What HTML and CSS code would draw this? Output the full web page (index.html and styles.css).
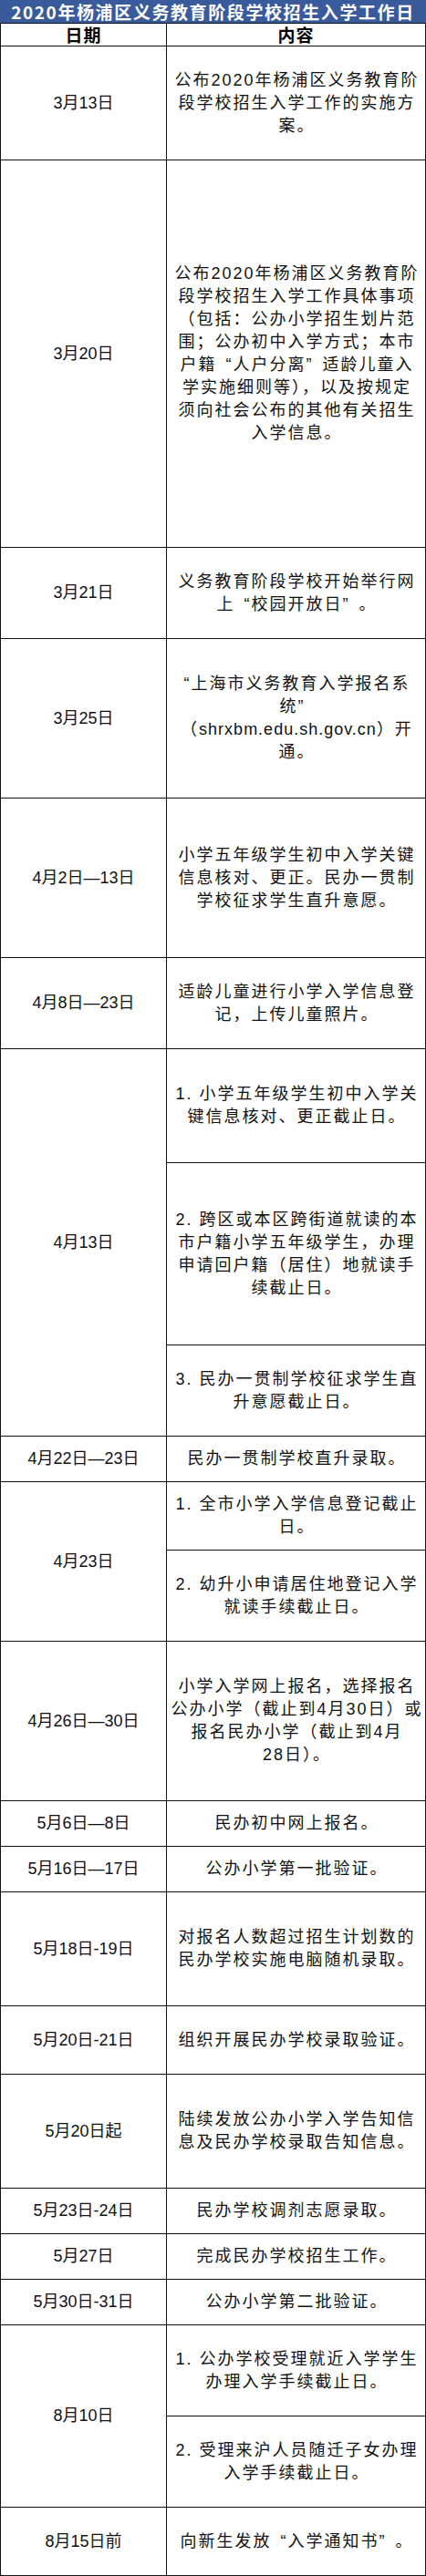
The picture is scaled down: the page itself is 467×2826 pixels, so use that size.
FILE: index.html
```html
<!DOCTYPE html>
<html lang="zh-CN">
<head>
<meta charset="utf-8">
<title>2020年杨浦区义务教育阶段学校招生入学工作日</title>
<link rel="stylesheet" href="styles.css">
</head>
<body>
<div class="sheet">
  <div class="title">2020年杨浦区义务教育阶段学校招生入学工作日</div>
  <div class="head c1">日期</div>
  <div class="head c2">内容</div>

  <div class="date">3月13日</div>
  <div class="body r125"><p class="txt">公布2020年杨浦区义务教育阶<br>段学校招生入学工作的实施方<br>案。</p></div>

  <div class="date">3月20日</div>
  <div class="body r425"><p class="txt">公布2020年杨浦区义务教育阶<br>段学校招生入学工作具体事项<br>（包括：公办小学招生划片范<br>围；公办初中入学方式；本市<br>户籍<span class="q open">“</span>人户分离<span class="q close">”</span>适龄儿童入<br>学实施细则等），以及按规定<br>须向社会公布的其他有关招生<br>入学信息。</p></div>

  <div class="date">3月21日</div>
  <div class="body r100"><p class="txt">义务教育阶段学校开始举行网<br>上<span class="q open">“</span>校园开放日<span class="q close">”</span>。</p></div>

  <div class="date">3月25日</div>
  <div class="body r175"><p class="txt">“上海市义务教育入学报名系<br>统<span class="q close">”</span><br>（<span class="url">shrxbm.edu.sh.gov.cn</span>）开<br>通。</p></div>

  <div class="date">4月2日—13日</div>
  <div class="body r175"><p class="txt">小学五年级学生初中入学关键<br>信息核对、更正。民办一贯制<br>学校征求学生直升意愿。</p></div>

  <div class="date">4月8日—23日</div>
  <div class="body r100"><p class="txt">适龄儿童进行小学入学信息登<br>记，上传儿童照片。</p></div>

  <div class="date span3">4月13日</div>
  <div class="body r125"><p class="txt">1. 小学五年级学生初中入学关<br>键信息核对、更正截止日。</p></div>
  <div class="body r200"><p class="txt">2. 跨区或本区跨街道就读的本<br>市户籍小学五年级学生，办理<br>申请回户籍（居住）地就读手<br>续截止日。</p></div>
  <div class="body r100"><p class="txt">3. 民办一贯制学校征求学生直<br>升意愿截止日。</p></div>

  <div class="date">4月22日—23日</div>
  <div class="body r50"><p class="txt">民办一贯制学校直升录取。</p></div>

  <div class="date span2">4月23日</div>
  <div class="body r75"><p class="txt">1. 全市小学入学信息登记截止<br>日。</p></div>
  <div class="body r100"><p class="txt">2. 幼升小申请居住地登记入学<br>就读手续截止日。</p></div>

  <div class="date">4月26日—30日</div>
  <div class="body r175"><p class="txt">小学入学网上报名，选择报名<br>公办小学（截止到4月30日）或<br>报名民办小学（截止到4月<br>28日）。</p></div>

  <div class="date">5月6日—8日</div>
  <div class="body r50"><p class="txt">民办初中网上报名。</p></div>

  <div class="date">5月16日—17日</div>
  <div class="body r50"><p class="txt">公办小学第一批验证。</p></div>

  <div class="date">5月18日-19日</div>
  <div class="body r125"><p class="txt">对报名人数超过招生计划数的<br>民办学校实施电脑随机录取。</p></div>

  <div class="date">5月20日-21日</div>
  <div class="body r75"><p class="txt">组织开展民办学校录取验证。</p></div>

  <div class="date">5月20日起</div>
  <div class="body r125"><p class="txt">陆续发放公办小学入学告知信<br>息及民办学校录取告知信息。</p></div>

  <div class="date">5月23日-24日</div>
  <div class="body r50"><p class="txt">民办学校调剂志愿录取。</p></div>

  <div class="date">5月27日</div>
  <div class="body r50"><p class="txt">完成民办学校招生工作。</p></div>

  <div class="date">5月30日-31日</div>
  <div class="body r50"><p class="txt">公办小学第二批验证。</p></div>

  <div class="date span2">8月10日</div>
  <div class="body r100"><p class="txt">1. 公办学校受理就近入学学生<br>办理入学手续截止日。</p></div>
  <div class="body r100"><p class="txt">2. 受理来沪人员随迁子女办理<br>入学手续截止日。</p></div>

  <div class="date">8月15日前</div>
  <div class="body r75"><p class="txt">向新生发放<span class="q open">“</span>入学通知书<span class="q close">”</span>。</p></div>
</div>
</body>
</html>
```

FILE: styles.css
```css
html, body {
  margin: 0;
  padding: 0;
  background: #ffffff;
}

.sheet {
  box-sizing: border-box;
  width: 467px;
  display: grid;
  grid-template-columns: 181px 283px;
  gap: 1px;
  padding: 0 1px 1px 1px;
  background: #111111;
  font-family: "Liberation Sans", "Noto Sans CJK SC", sans-serif;
  color: #111111;
}

.title {
  grid-column: 1 / -1;
  margin: 0 -1px;
  height: 25px;
  background: #3a5b9b;
  color: #ffffff;
  font-family: "Noto Sans CJK SC", sans-serif;
  font-weight: 700;
  font-size: 19px;
  letter-spacing: 1.6px;
  line-height: 25px;
  text-align: center;
  white-space: nowrap;
}

.head,
.date,
.body {
  background: #ffffff;
  display: flex;
  align-items: center;
  justify-content: center;
  text-align: center;
  white-space: nowrap;
}

.head {
  height: 24px;
  font-family: "Noto Sans CJK SC", sans-serif;
  font-weight: 700;
  font-size: 19px;
  letter-spacing: 1px;
  line-height: 24px;
  color: #000000;
}

.c1 { grid-column: 1; }
.c2 { grid-column: 2; }

.date {
  grid-column: 1;
  font-size: 18px;
  line-height: 25px;
}

.span2 { grid-row: span 2; }
.span3 { grid-row: span 3; }

.body {
  grid-column: 2;
  font-size: 18px;
  letter-spacing: 2px;
  line-height: 25px;
  padding-left: 2px;
}

.txt {
  margin: 0;
}

/* full-width CJK quotation marks */
.q {
  display: inline-block;
  width: 18px;
}

.q.open {
  text-align: right;
}

.q.close {
  text-align: left;
}

.url {
  letter-spacing: 1px;
}

.r50 { height: 49px; }
.r75 { height: 74px; }
.r100 { height: 99px; }
.r125 { height: 124px; }
.r175 { height: 174px; }
.r200 { height: 199px; }
.r425 { height: 424px; }
```
